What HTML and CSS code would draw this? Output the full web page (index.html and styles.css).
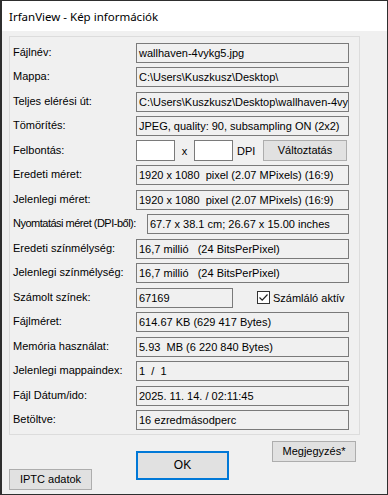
FILE: index.html
```html
<!DOCTYPE html>
<html lang="hu">
<head>
<meta charset="utf-8">
<title>IrfanView - Kép információk</title>
<link rel="stylesheet" href="styles.css">
</head>
<body>
<div class="window">
  <div class="titlebar">IrfanView - Kép információk</div>
  <div class="client">
    <div class="group">
      <span class="lbl">Fájlnév:</span><div class="val">wallhaven-4vykg5.jpg</div>
      <span class="lbl">Mappa:</span><div class="val">C:\Users\Kuszkusz\Desktop\</div>
      <span class="lbl">Teljes elérési út:</span><div class="val">C:\Users\Kuszkusz\Desktop\wallhaven-4vykg5.jpg</div>
      <span class="lbl">Tömörítés:</span><div class="val">JPEG, quality: 90, subsampling ON (2x2)</div>
      <span class="lbl">Felbontás:</span>
      <div class="cell">
        <div class="input"></div><span class="x">x</span><div class="input"></div><span class="dpi">DPI</span>
        <div class="btn change">Változtatás</div>
      </div>
      <span class="lbl">Eredeti méret:</span><div class="val">1920 x 1080&nbsp; pixel (2.07 MPixels) (16:9)</div>
      <span class="lbl">Jelenlegi méret:</span><div class="val">1920 x 1080&nbsp; pixel (2.07 MPixels) (16:9)</div>
      <span class="lbl narrow">Nyomtatási méret (DPI-ből):</span>
      <div class="cell"><div class="val print">67.7 x 38.1 cm; 26.67 x 15.00 inches</div></div>
      <span class="lbl">Eredeti színmélység:</span><div class="val">16,7 millió&nbsp;&nbsp; (24 BitsPerPixel)</div>
      <span class="lbl">Jelenlegi színmélység:</span><div class="val">16,7 millió&nbsp;&nbsp; (24 BitsPerPixel)</div>
      <span class="lbl">Számolt színek:</span>
      <div class="cell">
        <div class="val colors">67169</div>
        <span class="check"><svg width="13" height="13" viewBox="0 0 13 13"><rect x="0.5" y="0.5" width="12" height="12" fill="#fff" stroke="#333"/><path d="M2.5 6.5 L5.2 9.2 L10.5 3.5" fill="none" stroke="#222" stroke-width="1.2"/></svg>Számláló aktív</span>
      </div>
      <span class="lbl">Fájlméret:</span><div class="val">614.67 KB (629 417 Bytes)</div>
      <span class="lbl">Memória használat:</span><div class="val">5.93&nbsp; MB (6 220 840 Bytes)</div>
      <span class="lbl">Jelenlegi mappaindex:</span><div class="val">1&nbsp; /&nbsp; 1</div>
      <span class="lbl">Fájl Dátum/ido:</span><div class="val">2025. 11. 14. / 02:11:45</div>
      <span class="lbl">Betöltve:</span><div class="val">16 ezredmásodperc</div>
    </div>
    <div class="buttons">
      <div class="btn iptc">IPTC adatok</div>
      <div class="btn ok">OK</div>
      <div class="btn note">Megjegyzés*</div>
    </div>
  </div>
</div>
</body>
</html>
```

FILE: styles.css
```css
* { box-sizing: border-box; }
html, body { margin: 0; padding: 0; background: #f0f0f0; }
body { font-family: "Liberation Sans", Arial, sans-serif; font-size: 11px; color: #000; }

.window {
  width: 388px;
  height: 495px;
  border: 1px solid #2e2e2e;
  border-left-width: 2px;
  display: flex;
  flex-direction: column;
}
.titlebar {
  height: 30px;
  background: #fff;
  font-family: "Noto Sans", sans-serif;
  font-size: 11.5px;
  line-height: 31px;
  padding-left: 7px;
  color: #000;
}
.client {
  flex: 1;
  background: #f0f0f0;
  padding: 5px 0 0 7px;
}
.group {
  width: 351px;
  border: 1px solid #dcdcdc;
  padding: 6px 0 4px 3px;
  display: grid;
  grid-template-columns: 123px 213px;
  grid-auto-rows: 20px;
  row-gap: 4.47px;
  align-items: center;
}
.lbl { white-space: nowrap; padding-bottom: 2px; }
.lbl.narrow { letter-spacing: -0.5px; }
.val {
  height: 20px;
  border: 1px solid #7a7a7a;
  background: #f0f0f0;
  padding: 0 2px;
  line-height: 18px;
  white-space: nowrap;
  overflow: hidden;
}
.cell { display: flex; align-items: center; height: 20px; }
.input {
  width: 39px;
  height: 21px;
  border: 1px solid #7a7a7a;
  background: #fff;
}
.x { width: 19px; text-align: center; }
.dpi { margin-left: 4px; width: 26px; }
.btn {
  background: #e1e1e1;
  border: 1px solid #adadad;
  text-align: center;
  white-space: nowrap;
}
.change { width: 84px; height: 21px; line-height: 19px; }
.print { flex: 1; margin-left: 11px; }
.colors { width: 97px; }
.check { display: flex; align-items: center; gap: 3px; margin-left: 24px; }
.check svg { display: block; }

.buttons {
  display: flex;
  align-items: flex-start;
}
.iptc { width: 83px; height: 21px; line-height: 19px; margin-top: 34px; }
.ok {
  width: 93px; height: 29px; line-height: 25px;
  border: 2px solid #0078d7;
  margin-top: 16px; margin-left: 44px;
  font-size: 12px;
}
.note { width: 84px; height: 21px; line-height: 19px; margin-top: 6px; margin-left: 43px; }
```
